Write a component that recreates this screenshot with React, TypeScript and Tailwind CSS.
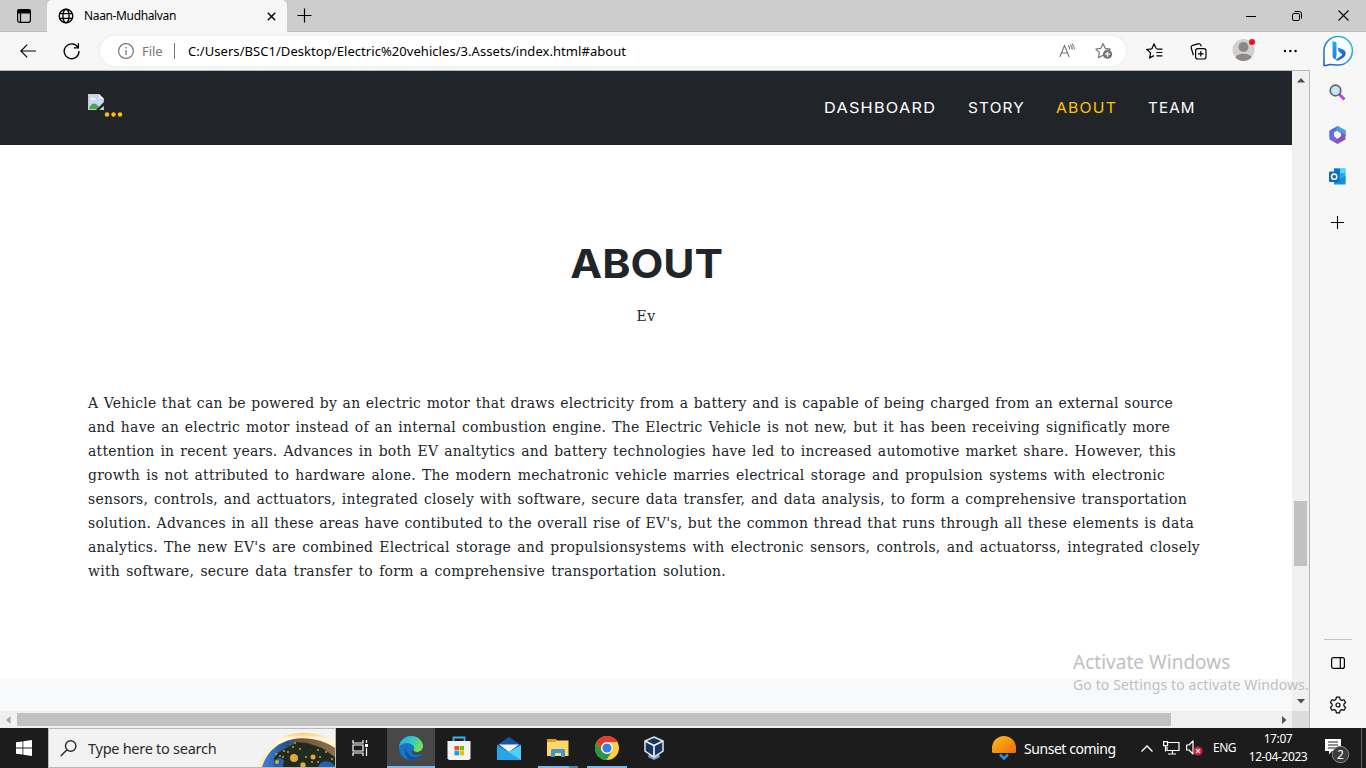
import React from "react";

const lines: [string, string][] = [
  ["A Vehicle that can be powered by an electric motor that draws electricity from a battery and is capable of being charged from an external source", "w-[1085px]"],
  ["and have an electric motor instead of an internal combustion engine. The Electric Vehicle is not new, but it has been receiving significatly more", "w-[1082px]"],
  ["attention in recent years. Advances in both EV analtytics and battery technologies have led to increased automotive market share. However, this", "w-[1088px]"],
  ["growth is not attributed to hardware alone. The modern mechatronic vehicle marries electrical storage and propulsion systems with electronic", "w-[1077px]"],
  ["sensors, controls, and acttuators, integrated closely with software, secure data transfer, and data analysis, to form a comprehensive transportation", "w-[1099px]"],
  ["solution. Advances in all these areas have contibuted to the overall rise of EV's, but the common thread that runs through all these elements is data", "w-[1106px]"],
  ["analytics. The new EV's are combined Electrical storage and propulsionsystems with electronic sensors, controls, and actuatorss, integrated closely", "w-[1112px]"],
  ["with software, secure data transfer to form a comprehensive transportation solution.", "w-[638px]"],
];

const Svg = ({ w, h, c = "", children, vb }: { w: number; h: number; c?: string; vb?: string; children: React.ReactNode }) => (
  <svg width={w} height={h} viewBox={vb || `0 0 ${w} ${h}`} className={"block shrink-0 " + c} fill="none" stroke="currentColor" strokeWidth="1.2">
    {children}
  </svg>
);

function TabStrip() {
  return (
    <div className="flex h-8 shrink-0 items-stretch bg-[#cdcdcd] text-black">
      <div className="flex w-[47px] items-center justify-center border-b border-[#bdbdbd]">
        <Svg w={16} h={16}>
          <rect x="1.6" y="1.6" width="12.8" height="12.8" rx="2.2" />
          <path d="M2 2h12v3H2z" fill="currentColor" />
          <path d="M4.5 5v9" />
        </Svg>
      </div>
      <div className="flex w-60 items-center rounded-t-[5px] bg-[#f7f7f7] pl-[11px]">
        <Svg w={16} h={16}>
          <g strokeWidth="1.4">
            <circle cx="8" cy="8" r="6.8" />
            <ellipse cx="8" cy="8" rx="3.1" ry="6.8" />
            <path d="M1.8 5.6h12.4M1.8 10.4h12.4" />
          </g>
        </Svg>
        <span className="ml-[10px] w-[183px] text-[12px] leading-4 tracking-[-0.36px]">Naan-Mudhalvan</span>
        <Svg w={9} h={9} c="mt-px">
          <path d="M.8.8l7.4 7.4M8.2.8L.8 8.2" strokeWidth="1.4" />
        </Svg>
      </div>
      <div className="flex flex-1 items-center border-b border-[#bdbdbd] pl-[10px]">
        <Svg w={15} h={15}><path d="M7.5.5v14M.5 7.5h14" /></Svg>
        <div className="ml-auto flex items-center gap-[36px] pr-[17px]">
          <Svg w={10} h={10}><path d="M0 5.5h10" strokeWidth="1" /></Svg>
          <Svg w={10} h={10}>
            <rect x=".5" y="2.5" width="7" height="7" rx="1.4" strokeWidth="1" />
            <path d="M2.5.5h4.7a2.3 2.3 0 0 1 2.3 2.3v4.7" strokeWidth="1" />
          </Svg>
          <Svg w={11} h={11}><path d="M.5.5l10 10M10.5.5l-10 10" strokeWidth="1.1" /></Svg>
        </div>
      </div>
    </div>
  );
}

function Toolbar() {
  return (
    <div className="flex h-[38px] shrink-0 items-center bg-[#f7f7f7] pl-5 text-black">
      <Svg w={16} h={14}><path d="M7.2.6L.8 7l6.4 6.4M.8 7H16" /></Svg>
      <Svg w={17} h={18} c="ml-[27px]">
        <path d="M15 5.6A7.4 7.4 0 1 0 16 9" strokeWidth="1.3" />
        <path d="M15.4 1.2v4.6h-4.6" strokeWidth="1.3" />
      </Svg>
      <div className="ml-[20px] flex h-[30px] w-[1026px] items-center rounded-full bg-white pl-[18px] text-[#767676] shadow-[0_0_4px_rgba(0,0,0,0.07)]">
        <Svg w={16} h={16}>
          <circle cx="8" cy="8" r="7.4" />
          <path d="M8 7v5M8 4v1.4" strokeWidth="1.3" />
        </Svg>
        <span className="ml-[8px] mt-px w-[21px] text-[13px] tracking-[-0.1px]">File</span>
        <div className="ml-[11px] h-4 w-px bg-[#767676]" />
        <span className="ml-[13px] mt-px w-[866px] whitespace-nowrap text-[13px] tracking-[0.055px] text-black">C:/Users/BSC1/Desktop/Electric%20vehicles/3.Assets/index.html#about</span>
      </div>
      <div className="-ml-[67px] flex items-center text-[#767676]">
        <Svg w={16} h={16}>
          <path d="M.8 14L5.5 2.5 10.2 14M2.4 10h6.2M9 2.5a4 4 0 0 1 1.6 4M11 1.6a6 6 0 0 1 2.2 5M12.8.6a8 8 0 0 1 2.6 6" strokeWidth="1.1" />
        </Svg>
        <Svg w={18} h={18} c="ml-[20px]">
          <path d="M8.800 14L8 13.300l-4.500 2.300.9-5L.9 7l5-.7L8 1.500l2.200 4.800 5 .7-1.200 1.200" strokeLinejoin="round" />
          <circle cx="12.5" cy="12.2" r="4.6" fill="#767676" stroke="none" />
          <path d="M12.5 9.7v5M10 12.2h5" stroke="#fff" />
        </Svg>
      </div>
      <div className="ml-[33px] flex items-center">
        <Svg w={17} h={17}>
          <path d="M10.5 5.9L8 1 5.8 5.9 1 6.5l3.6 3.4-1 5L8 12.6M11 6.2h5.4M10.4 9.5h6M10.4 12.8h6" />
        </Svg>
        <Svg w={17} h={17} c="ml-[27px]">
          <rect x="5.6" y="5.6" width="10.4" height="10.4" rx="2.2" />
          <path d="M10.8 8v5.6M8 10.800h5.600M3.400 12.200L1.200 5a2.400 2.400 0 0 1 1.600-2.700L8 .8a2.400 2.400 0 0 1 3 1.600l.3 1" />
        </Svg>
        <Svg w={24} h={24} c="ml-[25px] -mt-1">
          <g stroke="none">
            <circle cx="11.500" cy="13" r="11" fill="#d3d1cf" />
            <circle cx="11.500" cy="10" r="5" fill="#8c8885" />
            <path d="M3.500 20.500c1.500-5 14.500-5 16 0a11 11 0 0 1-16 0z" fill="#8c8885" />
            <circle cx="20" cy="5" r="3" fill="#e81123" />
          </g>
        </Svg>
        <Svg w={14} h={4} c="ml-[27px]">
          <g fill="currentColor" stroke="none"><circle cx="2" cy="2" r="1.200" /><circle cx="7.300" cy="2" r="1.200" /><circle cx="12.600" cy="2" r="1.200" /></g>
        </Svg>
      </div>
    </div>
  );
}

function Page() {
  return (
    <div className="flex w-[1292px] flex-col bg-white">
      <header className="flex h-[74px] shrink-0 bg-[#212529] pl-[88px]">
        <div className="mt-[23px] flex h-6 w-[736px] items-start">
          <Svg w={16} h={16}>
            <g stroke="none">
              <path d="M0 0h11l5 5v11H0z" fill="#c8c8c8" />
              <path d="M1 1h9.500v4.500H15V15H1z" fill="#c3d9f8" />
              <path d="M2.500 5.500c0-2 2-2 2.500-1 1-1 3 0 2.500 1.500z" fill="#fff" />
              <path d="M1 15c2-6 6-7 9-3l3 3z" fill="#4fa83d" />
              <path d="M16 8L8 16h3l5-4z" fill="#212529" />
              <path d="M11 0v5h5z" fill="#f4f4f4" />
            </g>
          </Svg>
          <Svg w={19} h={5} c="mt-[18px]">
            <g fill="#ffc107" stroke="none"><circle cx="3" cy="2.500" r="2.200" /><circle cx="9.500" cy="2.500" r="2.200" /><circle cx="16" cy="2.500" r="2.200" /></g>
          </Svg>
        </div>
        <nav className="flex h-[74px] items-center whitespace-nowrap pt-px font-[Inter,sans-serif] text-[15px] tracking-[1.15px] text-white">
          <span className="w-[143.500px]"><span className="inline-block origin-left scale-x-[1.085]">DASHBOARD</span></span>
          <span className="w-[88px]"><span className="inline-block origin-left scale-x-[1.025]">STORY</span></span>
          <span className="w-[92.500px] text-[#ffc107]"><span className="inline-block origin-left scale-x-[1.05]">ABOUT</span></span>
          <span className="inline-block origin-left scale-x-[1.01]">TEAM</span>
        </nav>
      </header>
      <main className="flex h-[534px] shrink-0 flex-col items-center pt-[95px] text-[#212529]">
        <h2 className="ml-[1px] h-12 scale-x-[1.08] font-[Inter,sans-serif] text-[39.500px] font-bold leading-12">ABOUT</h2>
        <p className="mt-[16px] font-['DejaVu_Serif_Condensed','DejaVu_Serif',serif] text-[15.500px] leading-6 tracking-[0.4px]">Ev</p>
        <div className="mt-[63px] w-[1116px] font-['DejaVu_Serif_Condensed','DejaVu_Serif',serif] text-[15.500px] leading-6 tracking-[0.25px]">
          {lines.map(([t, w]) => (
            <p key={t} className={"h-6 whitespace-nowrap [text-align-last:justify] " + w}>{t}</p>
          ))}
        </div>
      </main>
      <div className="flex-1 bg-[#f8f9fa]" />
    </div>
  );
}

function Sidebar() {
  return (
    <aside className="flex w-14 shrink-0 flex-col items-center bg-[#f7f7f7] text-black">
      <svg width="32" height="34" viewBox="0 0 32 34" className="mt-[3px] block">
        <defs>
          <linearGradient id="bubble" x1="0" y1="1" x2="1" y2="0"><stop stopColor="#2452c5" /><stop offset=".55" stopColor="#1b9de2" /><stop offset="1" stopColor="#2bc3d8" /></linearGradient>
          <linearGradient id="bing" x1="0" y1="0" x2="1" y2="1"><stop stopColor="#25b5ee" /><stop offset="1" stopColor="#1f4fd8" /></linearGradient>
        </defs>
        <path d="M2 30.500V16A14.200 14.200 0 1 1 16 30c-4 0-6-.8-8-.5s-4 1.200-6 1z" fill="#fff" stroke="url(#bubble)" strokeWidth="1.500" strokeLinejoin="round" />
        <path d="M10.500 6l3 1q1 .4 1 1.400V20l-1 4.500q-3-1-3-4zM15.700 12.500l5 1.700q3 1.200 3 4.300 0 2.500-2.500 4.200l-4.200 2.600q-1.800 1-3.500-.6l5.800-4q1.700-1.500-.3-2.500l-1.300-.6q-.8-.4-1.100-1.200z" fill="url(#bing)" />
      </svg>
      <svg width="17" height="17" viewBox="0 0 17 17" className="mr-[2px] mt-[15px] block">
        <path d="M10.500 10.500l5 5" stroke="#c13cf0" strokeWidth="3" />
        <circle cx="6.500" cy="6.500" r="5.300" fill="#bfe6fb" stroke="#666" strokeWidth="1.700" />
      </svg>
      <svg width="17" height="18" viewBox="0 0 17 18" className="mr-px mt-[25px] block">
        <path d="M8.500 0l8 4.500v5.500l-5-3-3-2.500-4 2V13L.5 11V4.500z" fill="#5568d6" />
        <path d="M8.500 0l8 4.500V10l-5-3-5-3z" fill="#3fa4e0" />
        <path d="M16.500 9v4.500l-8 4.500-6-3.500 6-2 3.500-3V6z" fill="#8b55b8" />
        <path d="M.5 5v8.500l3 1.500 5-3-3.500-2.500V5.500l3.500-2z" fill="#6b6be0" />
        <path d="M8.500 5.800l3 1.700v3.300l-3 1.700-3-1.700V7.500z" fill="#f7f7f7" />
      </svg>
      <svg width="17" height="17" viewBox="0 0 17 17" className="mr-px mt-[24px] block">
        <path d="M5 .5h11.500v14H5z" fill="#28a8ea" />
        <path d="M5 .5h6V5H5z" fill="#0078d4" /><path d="M11 .5h5.500V5H11z" fill="#50d9ff" />
        <path d="M5 16.500h11.500V8L5 14z" fill="#1490df" />
        <rect y="3.500" width="10.500" height="10.500" rx="1" fill="#0f6cbd" />
        <circle cx="5.200" cy="8.700" r="2.600" fill="none" stroke="#fff" strokeWidth="1.500" />
      </svg>
      <Svg w={13} h={13} c="mr-px mt-[31px]"><path d="M6.500 0v13M0 6.500h13" strokeWidth="1.100" /></Svg>
      <div className="mt-auto h-px w-7 bg-[#c4c4c4]" />
      <Svg w={14} h={12} c="mt-[17px]"><rect x=".6" y=".6" width="12.800" height="10.800" rx="2" /><path d="M9.300 1v10" /></Svg>
      <Svg w={18} h={18} c="mb-[14px] mt-[27px]">
        <path d="M7.400 1.200h3.200l.6 2.300 1.500.9 2.300-.7 1.600 2.800-1.700 1.600v1.800l1.700 1.600-1.600 2.800-2.300-.7-1.500.9-.6 2.300H7.400l-.6-2.300-1.500-.9-2.300.7-1.600-2.800 1.700-1.600V8.100L1.400 6.500 3 3.700l2.300.7 1.500-.9z" strokeLinejoin="round" />
        <circle cx="9" cy="9" r="2" />
      </Svg>
    </aside>
  );
}

function Taskbar() {
  return (
    <div className="flex h-10 shrink-0 items-center bg-[#1c1c1c] text-white">
      <div className="flex w-12 justify-center">
        <svg width="16" height="16" viewBox="0 0 16 16" fill="#fff"><path d="M0 2.300L6.500 1.400v6.100H0zM7.300 1.300L16 0v7.500H7.300zM0 8.400h6.500v6.200L0 13.700zM7.300 8.400H16V16l-8.700-1.300z" /></svg>
      </div>
      <div className="flex h-10 w-72 items-center overflow-hidden border border-[#b9b9b9] bg-[#f2f2f2] pl-[11px] text-[#2b2b2b]">
        <Svg w={17} h={17}><circle cx="10.700" cy="6" r="5.200" strokeWidth="1.400" /><path d="M7 9.700L.8 16" strokeWidth="1.500" /></Svg>
        <span className="ml-[11px] w-[170px] whitespace-nowrap pt-px text-[14.500px] tracking-[-0.270px]">Type here to search</span>
        <svg width="77" height="38" viewBox="0 0 77 38" className="block shrink-0">
          <defs>
            <linearGradient id="halo" x1="0" y1="0" x2="0" y2="1"><stop stopColor="#f8cb62" /><stop offset=".16" stopColor="#fff6dc" /><stop offset="1" stopColor="#fbe9bd" /></linearGradient>
            <linearGradient id="globe"><stop stopColor="#3e83da" /><stop offset=".35" stopColor="#28508a" /><stop offset=".5" stopColor="#6a5636" /><stop offset="1" stopColor="#8d6f49" /></linearGradient>
          </defs>
          <path d="M1 38C12-3 52 0 77 11v27z" fill="url(#halo)" />
          <path d="M4 38C14 5 54 3 77 19v19z" fill="url(#globe)" />
          <path d="M17 38l-1-9 5-6 13-7 3-3 12 1 15 5 13 9v10z" fill="#222b21" />
          <path d="M16 33c3-5 8-5 10-1l-1 6h-9zM60 38c3-8 12-7 17-1v1z" fill="#285fae" />
          <g fill="#d9ac3a">
            <circle cx="36" cy="29" r="4" /><circle cx="55" cy="28" r="2.500" /><circle cx="45" cy="36" r="2.700" /><circle cx="19" cy="33" r="2" />
            {[[18, 25], [22, 27], [26, 22], [30, 23], [35, 18], [42, 20], [48, 28], [60, 21], [68, 23], [62, 28], [54, 33], [74, 30], [25, 28], [37, 14], [60, 33]].map(([x, y]) => <circle key={x + "-" + y} cx={x} cy={y} r=".9" />)}
          </g>
        </svg>
      </div>
      <div className="flex w-[51px] justify-center pr-[3px]">
        <Svg w={17} h={16}><path d="M1 0v3h10V0M1 16v-3h10v3M1 5h10v6H1zM14.500 0v3M14.500 8v8" /><path d="M13 4h3v3h-3z" fill="#fff" stroke="none" /></Svg>
      </div>
      <div className="flex h-10 w-12 flex-col items-center bg-[#484848] pt-2">
        <svg width="24" height="24" viewBox="0 0 24 24">
          <defs><linearGradient id="edgetop" x1="0" y1="0" x2="1" y2=".4"><stop stopColor="#2ba8dc" /><stop offset=".5" stopColor="#31c5d1" /><stop offset="1" stopColor="#73df55" /></linearGradient></defs>
          <circle cx="12" cy="12" r="12" fill="#1576c8" />
          <path d="M0 11C1 4 6 0 12 0c7 0 12 5 12 10 0 4-3 6-6 6-2.500 0-4-1-3.500-2.300C17 11 13 7 8 7c-4 0-7 2-8 4z" fill="url(#edgetop)" />
          <path d="M8.500 9c-3 5 0 11 6 12 3 .5 6-.5 8-3-2 4-7 6.500-11 5.800C6 22.500 4.500 13 8.500 9z" fill="#124f9b" />
          <path d="M14.500 13.700C14 15 15.500 16 18 16c2.500 0 5-1.500 6-4v6h-2c-5 2.500-10 .5-9.500-3.500z" fill="#484848" />
        </svg>
        <div className="mt-auto h-0.5 w-12 bg-[#76b9ed]" />
      </div>
      <div className="flex w-12 justify-center pr-px">
        <svg width="24" height="24" viewBox="0 0 24 24">
          <path d="M6.500 6V1.500h11V6" fill="none" stroke="#37b6ec" strokeWidth="1.800" />
          <path d="M.5 5h23v17.500l-1.500 1.500H2L.5 22.500z" fill="#f3f3f3" />
          <path d="M7.500 10H12v4.300H7.500z" fill="#f25022" /><path d="M12.700 10h4.300v4.300h-4.300z" fill="#7fba00" /><path d="M7.500 15H12v4.300H7.500z" fill="#00a4ef" /><path d="M12.700 15h4.300v4.300h-4.300z" fill="#ffb900" />
        </svg>
      </div>
      <div className="flex w-[52px] justify-center pr-px">
        <svg width="24" height="23" viewBox="0 0 24 23">
          <path d="M0 8L12 0l12 8v4H0z" fill="#1456a0" /><path d="M0 8l12 7 12-7v15H0z" fill="#28a5e8" /><path d="M2 7.500h20L12 15z" fill="#f4f4f4" /><path d="M24 8v15L9 13.500l3 1.500z" fill="#52cff8" />
        </svg>
      </div>
      <div className="-ml-px flex h-10 w-12 flex-col items-center pt-[11px]">
        <svg width="22" height="18" viewBox="0 0 22 18">
          <path d="M0 0h8.500l1.500 1.500h11.500V17H0z" fill="#ffd766" /><path d="M0 0h8.500l1 2-1.500 1H0z" fill="#e09c13" /><path d="M4 18v-7l1-1h12l1 1v7h-4v-4H8v4z" fill="#4295d5" />
        </svg>
        <div className="mt-auto flex h-0.5 w-10"><div className="w-[31px] bg-[#76b9ed]" /><div className="flex-1 bg-[#5482a8]" /></div>
      </div>
      <div className="flex h-10 w-[50px] flex-col items-center pt-2">
        <svg width="24" height="24" viewBox="0 0 24 24">
          <circle cx="12" cy="12" r="12" fill="#ffcd40" />
          <path d="M1.600 6A12 12 0 0 1 22.400 6H12a6 6 0 0 0-5.200 9z" fill="#e33b2e" />
          <path d="M1.600 6A12 12 0 0 0 11.500 24l5.700-9a6 6 0 0 1-10.400 0z" fill="#279847" />
          <circle cx="12" cy="12" r="5.800" fill="#fff" /><circle cx="12" cy="12" r="4.600" fill="#3b7ded" />
        </svg>
        <div className="mt-auto h-0.5 w-10 bg-[#76b9ed]" />
      </div>
      <div className="flex w-[44px] justify-center">
        <svg width="20" height="24" viewBox="0 0 20 24">
          <path d="M5 18h10l1 3-6 3-6-3z" fill="#8c9cb8" />
          <path d="M10 1l9 4v10l-9 6-9-6V5z" fill="#173660" stroke="#dce5f0" strokeWidth="1.500" />
          <path d="M1 5l9 4.500L19 5M10 9.500V20" fill="none" stroke="#eef3f8" strokeWidth="1.700" />
        </svg>
      </div>
      <div className="ml-auto flex items-center">
        <svg width="24" height="24" viewBox="0 0 24 24">
          <defs><linearGradient id="sun" x1="0" y1="0" x2="1" y2="1"><stop stopColor="#ffc01b" /><stop offset="1" stopColor="#ee6b09" /></linearGradient></defs>
          <path d="M1.500 17A1.500 1.500 0 0 1 0 15.500V12a12 12 0 0 1 24 0v3.500a1.500 1.500 0 0 1-1.500 1.500z" fill="url(#sun)" />
          <path d="M8 18.500l4 4 4-4" stroke="#2196e6" strokeWidth="2.500" fill="none" />
        </svg>
        <span className="ml-2 w-[92px] whitespace-nowrap pt-px text-[14px] tracking-[-0.450px]">Sunset coming</span>
        <Svg w={12} h={7} c="ml-[25px]"><path d="M.5 6.500L6 1l5.500 5.500" strokeWidth="1.400" /></Svg>
        <Svg w={17} h={14} c="ml-[10px]"><path d="M5 1.500h11v8H4V6M9.500 9.500v3M5 13h8M2.500 5v5.500" /><path d="M.6.6h4v4h-4z" /></Svg>
        <Svg w={17} h={16} c="ml-[6px]">
          <path d="M.6 5H3l4-4v13l-4-4H.6z" strokeLinejoin="round" />
          <circle cx="12" cy="11" r="4.500" fill="#e02030" stroke="none" /><path d="M10.200 9.200l3.600 3.600M13.800 9.200l-3.600 3.600" stroke="#fff" />
        </Svg>
        <span className="ml-[10px] w-6 whitespace-nowrap text-[12px] tracking-[-0.500px]">ENG</span>
        <div className="ml-[8px] w-[66px] whitespace-nowrap text-center text-[12px] leading-[18px] tracking-[-0.400px]">
          <div>17:07</div>
          <div>12-04-2023</div>
        </div>
        <svg width="26" height="26" viewBox="0 0 26 26" className="ml-[13px] mt-[6px] block">
          <path d="M1 1h16v12H8l-3 3.500V13H1z" fill="#fff" /><path d="M4 4h10M4 7h10M4 10h8" stroke="#222" strokeWidth="1" />
          <circle cx="16.500" cy="16.500" r="8.200" fill="#3b3b3b" stroke="#8a8a8a" />
          <text x="16.500" y="21" fill="#fff" fontSize="12" textAnchor="middle">2</text>
        </svg>
        <div className="ml-[11px] mr-1 h-10 w-px bg-[#5e5e5e]" />
      </div>
    </div>
  );
}

export default function App() {
  return (
    <div className="relative flex h-[768px] w-[1366px] flex-col overflow-hidden font-['Noto_Sans','Open_Sans',sans-serif]">
      <TabStrip />
      <div className="flex h-[696px] shrink-0">
        <div className="flex w-[1310px] flex-col">
          <Toolbar />
          <div className="flex flex-1 flex-col border-r border-t border-[#b8b8b8]">
            <div className="flex h-[640px]">
              <Page />
              <div className="flex w-[17px] flex-col items-center bg-[#f0f0f0]">
                <svg width="8" height="5" viewBox="0 0 8 5" className="mt-[7px] block" fill="#505050"><path d="M0 4.500L4 0l4 4.500z" /></svg>
                <div className="mt-[418px] h-[65px] w-[13px] bg-[#c1c1c1]" />
                <svg width="8" height="5" viewBox="0 0 8 5" className="mb-[7px] mt-auto block" fill="#505050"><path d="M0 0l4 4.500L8 0z" /></svg>
              </div>
            </div>
            <div className="flex h-[17px] items-center bg-[#f0f0f0]">
              <svg width="5" height="8" viewBox="0 0 5 8" className="ml-[6px] block" fill="#a3a3a3"><path d="M4.500 0L0 4l4.500 4z" /></svg>
              <div className="ml-[6px] h-[13px] w-[1154px] bg-[#c1c1c1]" />
              <svg width="5" height="8" viewBox="0 0 5 8" className="ml-auto block" fill="#505050"><path d="M0 0l4.500 4L0 8z" /></svg>
              <div className="ml-[5px] h-[17px] w-[17px] bg-[#dcdcdc]" />
            </div>
          </div>
        </div>
        <Sidebar />
      </div>
      <Taskbar />
      <div className="absolute left-[1073px] top-[650px] whitespace-nowrap text-[#c0c0c0]">
        <div className="text-[19px] leading-6 tracking-[0.020px]">Activate Windows</div>
        <div className="text-[14px] leading-[22px] tracking-[0.110px]">Go to Settings to activate Windows.</div>
      </div>
    </div>
  );
}
